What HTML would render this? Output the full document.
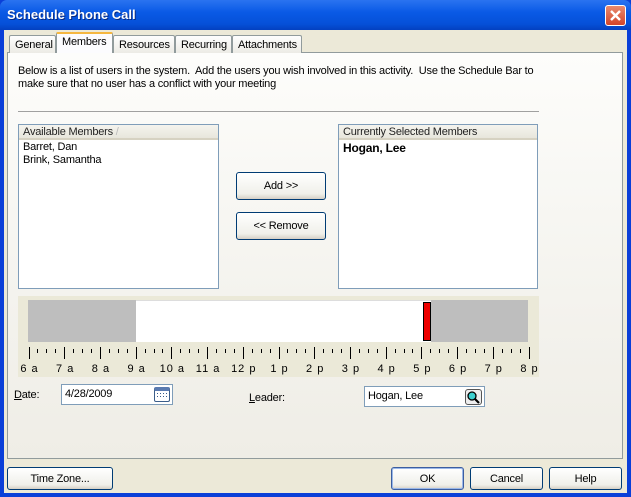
<!DOCTYPE html>
<html><head><style>
*{margin:0;padding:0;box-sizing:border-box}
body{width:631px;height:497px;overflow:hidden;background:#0a3fd8;font-family:"Liberation Sans",sans-serif;font-size:11px;color:#000;position:relative;letter-spacing:-0.2px}
.a{position:absolute}
#title{left:0;top:0;width:631px;height:30px;background:linear-gradient(#2a73f0,#0a5ae6 40%,#0550d8 80%,#0340c0);border-radius:7px 7px 0 0}
#title span{position:absolute;left:7px;top:7px;color:#fff;font-weight:bold;font-size:13px;text-shadow:1px 1px #0a2a80;letter-spacing:0}
#close{left:605px;top:5px;width:21px;height:21px;background:linear-gradient(#e88a6e,#d2452a);border:1px solid #fff;border-radius:3px}
#client{left:4px;top:30px;width:623px;height:463px;background:#ece9d8}
#panel{left:7px;top:52px;width:616px;height:407px;border:1px solid #919b9c;background:linear-gradient(#fdfdfb,#f4f3ee 60%,#efede6)}
.tab{top:35px;height:18px;border:1px solid #919b9c;border-bottom:none;background:linear-gradient(#fefefe,#ecebe5);border-radius:2px 2px 0 0;padding:3px 5px 0;white-space:nowrap}
.tab.sel{top:32px;height:21px;background:#fcfcfe;border-top:2px solid #f5b740;padding-top:2px}
.list{border:1px solid #7f9db9;background:#fff}
.list .h{height:15px;background:linear-gradient(#f5f4ee,#e8e6dc);border-bottom:2px solid #d6d2c2;padding:1px 0 0 4px;color:#222}
.btn{border:1px solid #003c74;border-radius:3px;background:linear-gradient(#fff,#f0f0ea 80%,#d6d0c5);text-align:center}
.inp{border:1px solid #7f9db9;background:#fff;padding:4px 3px}
</style></head><body>
<div class="a" id="title"><span>Schedule Phone Call</span></div>
<div class="a" id="close"><svg width="19" height="19"><path d="M5 5L14 14M14 5L5 14" stroke="#fff" stroke-width="2.4"/></svg></div>
<div class="a" id="client"></div>
<div class="a" id="panel"></div>
<div class="a tab" style="left:9px;width:47px">General</div>
<div class="a tab sel" style="left:56px;width:57px">Members</div>
<div class="a tab" style="left:113px;width:62px">Resources</div>
<div class="a tab" style="left:175px;width:57px">Recurring</div>
<div class="a tab" style="left:232px;width:70px">Attachments</div>
<div class="a" style="left:18px;top:65px;line-height:13px;width:560px">Below is a list of users in the system.&nbsp; Add the users you wish involved in this activity.&nbsp; Use the Schedule Bar to<br>make sure that no user has a conflict with your meeting</div>
<div class="a" style="left:18px;top:111px;width:521px;height:1px;background:#a0a0a0"></div>
<div class="a list" style="left:18px;top:124px;width:201px;height:165px"><div class="h">Available Members <span style="color:#bbb">/</span></div><div style="padding:1px 4px;line-height:13px">Barret, Dan<br>Brink, Samantha</div></div>
<div class="a list" style="left:338px;top:124px;width:200px;height:165px"><div class="h">Currently Selected Members</div><div style="padding:1px 4px;font-weight:bold;font-size:12px">Hogan, Lee</div></div>
<div class="a btn" style="left:236px;top:172px;width:90px;height:28px;padding-top:7px">Add &gt;&gt;</div>
<div class="a btn" style="left:236px;top:212px;width:90px;height:28px;padding-top:7px">&lt;&lt; Remove</div>
<div class="a" style="left:18px;top:296px;width:521px;height:81px;background:#ebe9d8"></div>
<div class="a" style="left:28px;top:300px;width:500px;height:42px;background:#fff;border-top:1px solid #ddd"></div>
<div class="a" style="left:28px;top:300px;width:108px;height:42px;background:#bebebe"></div>
<div class="a" style="left:431px;top:300px;width:97px;height:42px;background:#bebebe"></div>
<div class="a" style="left:423px;top:302px;width:8px;height:39px;background:#e00;border:1px solid #000"></div>
<div id="ticks"></div>
<div class="a" style="left:14px;top:389px"><u>D</u>ate:</div>
<div class="a inp" style="left:61px;top:384px;width:112px;height:21px;padding-top:3px">4/28/2009</div>
<div class="a" style="left:154px;top:387px;width:16px;height:15px;border:1px solid #3b5d8a;border-radius:2px;background:#fff;border-top:4px solid #5a7ab0"><svg width="14" height="10" style="position:absolute;left:0;top:0"><g fill="#3b5d8a"><rect x="2" y="2" width="1" height="1"/><rect x="5" y="2" width="1" height="1"/><rect x="8" y="2" width="1" height="1"/><rect x="11" y="2" width="1" height="1"/><rect x="2" y="5" width="1" height="1"/><rect x="5" y="5" width="1" height="1"/><rect x="8" y="5" width="1" height="1"/><rect x="11" y="5" width="1" height="1"/></g></svg></div>
<div class="a" style="left:249px;top:392px"><u>L</u>eader:</div>
<div class="a inp" style="left:364px;top:386px;width:121px;height:21px;padding-top:3px">Hogan, Lee</div>
<div class="a" style="left:465px;top:389px;width:17px;height:16px;border:1px solid #555;border-radius:3px;background:#eee"><svg width="15" height="14"><circle cx="6" cy="6" r="4" fill="#3cd0d0" stroke="#000" stroke-width="1.3"/><path d="M9 9L13 13" stroke="#000" stroke-width="2.2"/></svg></div>
<div class="a btn" style="left:7px;top:467px;width:106px;height:23px;padding-top:5px">Time Zone...</div>
<div class="a btn" style="left:391px;top:467px;width:73px;height:23px;padding-top:5px;border-color:#3c5ea0;box-shadow:inset 0 0 0 1px #9ab8e8">OK</div>
<div class="a btn" style="left:470px;top:467px;width:73px;height:23px;padding-top:5px">Cancel</div>
<div class="a btn" style="left:549px;top:467px;width:73px;height:23px;padding-top:5px">Help</div>
<script>
var h='',L=['6 a','7 a','8 a','9 a','10 a','11 a','12 p','1 p','2 p','3 p','4 p','5 p','6 p','7 p','8 p'];
for(var i=0;i<=56;i++){var x=Math.round(28.5+i*500/56);var maj=i%4==0;
h+='<div class="a" style="left:'+x+'px;top:'+(maj?347:349)+'px;width:1px;height:'+(maj?12:4)+'px;background:#000"></div>';}
for(var j=0;j<15;j++){var x=29.5+j*500/14;h+='<div class="a" style="left:'+(x-20)+'px;top:363px;width:40px;text-align:center;letter-spacing:1px">'+L[j]+'</div>';}
document.getElementById('ticks').innerHTML=h;
</script>
</body></html>
